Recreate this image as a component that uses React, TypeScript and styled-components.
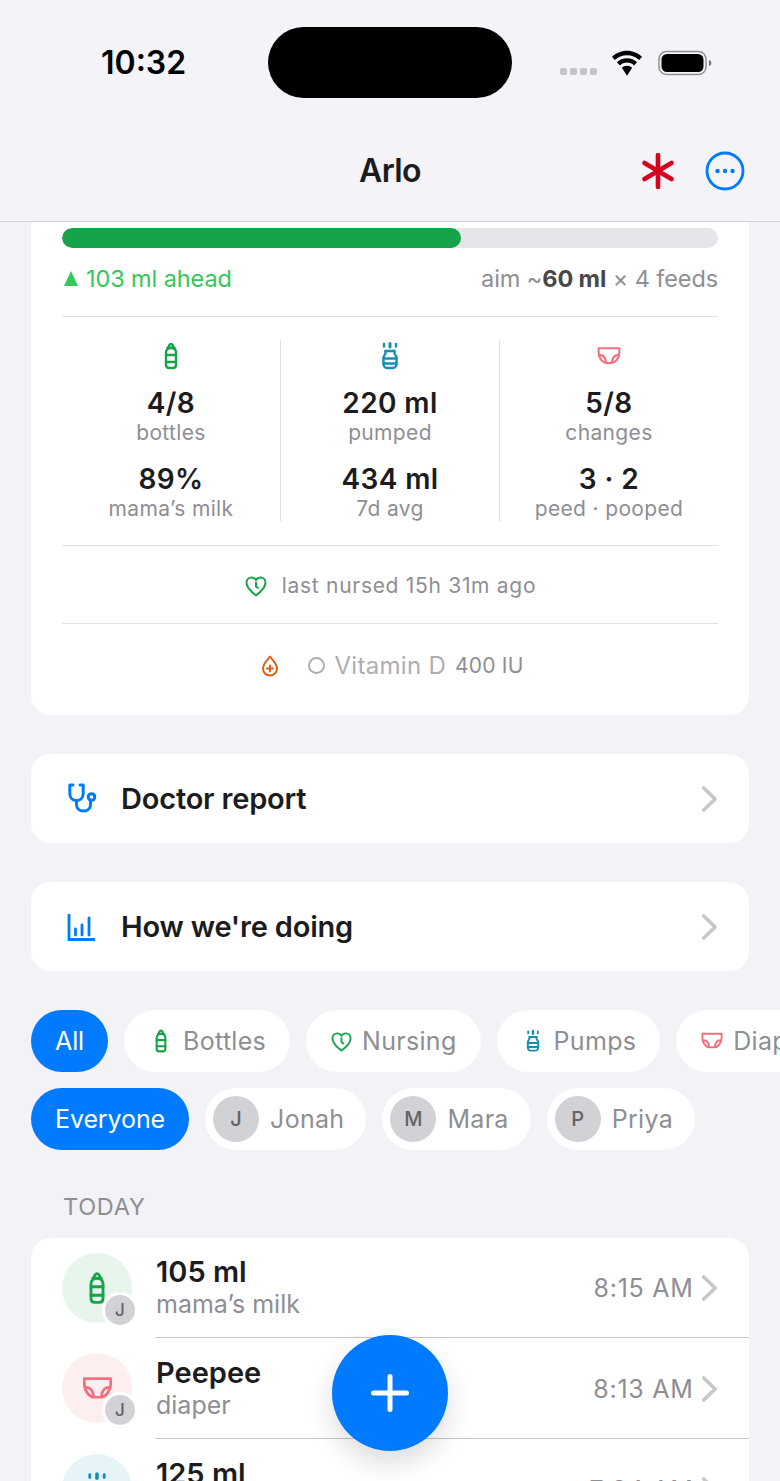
import styled, { createGlobalStyle } from 'styled-components';

const GlobalStyle = createGlobalStyle`
    html, body {
        margin: 0;
        padding: 0;
        background: #f2f2f7;
        font-family: "Inter", "Liberation Sans", sans-serif;
        -webkit-font-smoothing: antialiased;
    }
    * { box-sizing: border-box; }
`

const Screen = styled('div')`
    position: relative;
    width: 780px;
    height: 1481px;
    overflow: hidden;
    background: #f2f2f7;
    color: #1c1c1e;
`

const Header = styled('header')`
    height: 222px;
    border-bottom: 1px solid #d2d2d6;
    background: #f3f3f8;
`

const StatusBar = styled('div')`
    height: 122px;
    display: grid;
    grid-template-columns: 268px 244px 1fr;
    padding-top: 27px;
`

const Clock = styled('div')`
    font-size: 32px;
    font-weight: 600;
    line-height: 72px;
    height: 72px;
    color: #000;
    padding-left: 101px;
`

const Island = styled('div')`
    height: 71px;
    background: #000;
    border-radius: 36px;
`

const StatusIcons = styled('div')`
    display: flex;
    align-items: center;
    height: 72px;
    padding-left: 48px;
    gap: 12px;
`

const SignalDots = styled('div')`
    display: flex;
    gap: 3px;
    margin-top: 16px;
`

const SignalDot = styled('span')`
    width: 7px;
    height: 7px;
    border-radius: 2px;
    background: #c4c4c8;
`

const NavBar = styled('div')`
    height: 99px;
    display: grid;
    grid-template-columns: 1fr auto 1fr;
    align-items: center;
    padding: 0 35px;
`

const NavTitle = styled('div')`
    font-size: 32px;
    font-weight: 600;
    letter-spacing: -0.6px;
    margin-top: -2px;
`

const NavActions = styled('div')`
    display: flex;
    justify-content: flex-end;
    align-items: center;
    gap: 29px;
    margin-top: -2px;
`

const Content = styled('main')`
    padding: 0 31px;
`

const SummaryCard = styled('section')`
    background: #fff;
    border-radius: 0 0 20px 20px;
    padding: 6px 31px 0;
    height: 493px;
`

const ProgressTrack = styled('div')`
    height: 20px;
    border-radius: 10px;
    background: #e5e5ea;
    overflow: hidden;
`

const ProgressFill = styled('div')`
    height: 100%;
    border-radius: 10px;
    background: #16a34a;
`

const GoalRow = styled('div')`
    display: flex;
    justify-content: space-between;
    align-items: center;
    height: 69px;
    padding-bottom: 7px;
    border-bottom: 1px solid #e1e1e5;
    font-size: 23.5px;
`

const Ahead = styled('div')`
    display: flex;
    align-items: center;
    gap: 7px;
    margin-left: 2px;
    color: #34c759;
    letter-spacing: -0.1px;
`

const AheadArrow = styled('span')`
    width: 0;
    height: 0;
    margin-right: 1px;
    border-left: 7.5px solid transparent;
    border-right: 7.5px solid transparent;
    border-bottom: 15px solid #34c759;
`

const Aim = styled('div')`
    color: #8e8e93;
    letter-spacing: -0.1px;

    b {
        color: #48484a;
        font-weight: 700;
    }
`

const StatsGrid = styled('div')`
    display: grid;
    grid-template-columns: 218px 219px 219px;
    padding: 23px 0;
    border-bottom: 1px solid #e1e1e5;
`

const StatColumn = styled('div')<{ $divided?: boolean }>`
    height: 182px;
    display: flex;
    flex-direction: column;
    align-items: center;
    border-left: ${props => props.$divided ? '1px solid #e1e1e5' : 'none'};
`

const StatIcon = styled('div')`
    height: 32px;
    margin-bottom: 15px;
    display: flex;
    align-items: center;
    justify-content: center;
`

const StatValue = styled('div')`
    font-size: 28px;
    font-weight: 600;
    letter-spacing: 0.4px;
    line-height: 34px;
    color: #1c1c1e;
`

const StatLabel = styled('div')`
    font-size: 21px;
    letter-spacing: 0.35px;
    line-height: 26px;
    color: #8e8e93;
    margin-bottom: 16px;

    &:last-child {
        margin-bottom: 0;
    }
`

const NursedRow = styled('div')`
    height: 78px;
    padding-top: 2px;
    display: flex;
    align-items: center;
    justify-content: center;
    gap: 14px;
    font-size: 21px;
    letter-spacing: 0.7px;
    color: #8e8e93;
    border-bottom: 1px solid #e1e1e5;
`

const VitaminRow = styled('div')`
    height: 83px;
    padding-left: 4px;
    display: flex;
    align-items: center;
    justify-content: center;
    font-size: 21px;
    letter-spacing: 0.2px;
    color: #8e8e93;
`

const VitaminRing = styled('span')`
    width: 17px;
    height: 17px;
    margin: 0 9px 0 28px;
    border: 2px solid #aeaeb2;
    border-radius: 50%;
`

const VitaminName = styled('span')`
    font-size: 24px;
    letter-spacing: 0.3px;
    color: #aeaeb2;
    margin-right: 9px;
`

const LinkCard = styled('div')`
    height: 89px;
    margin-top: 39px;
    padding: 0 31px 0 36px;
    display: flex;
    align-items: center;
    background: #fff;
    border-radius: 20px;
`

const LinkIcon = styled('div')`
    width: 54px;
    display: flex;
`

const LinkLabel = styled('div')`
    flex: 1;
    font-size: 29px;
    font-weight: 600;
    letter-spacing: -0.2px;
    color: #1c1c1e;
`

const ChipRow = styled('div')`
    display: flex;
    gap: 16px;
    margin-top: 16px;
    width: 780px;
    overflow: hidden;
`

const ChipRowFirst = styled(ChipRow)`
    margin-top: 39px;
`

const Chip = styled('div')<{ $active?: boolean; $compact?: boolean }>`
    flex: none;
    height: 62px;
    padding: ${props => props.$compact ? '0 22px 0 8px' : '0 24px'};
    display: flex;
    align-items: center;
    gap: ${props => props.$compact ? '11px' : '9px'};
    border-radius: 31px;
    font-size: 25px;
    letter-spacing: ${props => props.$active ? '-0.1px' : '0.3px'};
    color: ${props => props.$active ? '#fff' : '#8e8e93'};
    background: ${props => props.$active ? '#007aff' : '#fff'};
`

const ChipAvatar = styled('span')`
    width: 46px;
    height: 46px;
    border-radius: 50%;
    background: #d1d1d6;
    color: #636366;
    font-size: 20px;
    font-weight: 500;
    display: flex;
    align-items: center;
    justify-content: center;
`

const SectionTitle = styled('div')`
    margin: 42px 0 0 32px;
    height: 30px;
    line-height: 30px;
    font-size: 23.5px;
    letter-spacing: 0.7px;
    color: #8e8e93;
`

const ListCard = styled('section')`
    margin-top: 16px;
    background: #fff;
    border-radius: 20px 20px 0 0;
`

const Row = styled('div')<{ $first?: boolean }>`
    display: flex;
    padding-left: 31px;
    height: ${props => props.$first ? '100px' : '101px'};
`

const RowAvatar = styled('div')<{ $tint: string }>`
    position: relative;
    flex: none;
    width: 70px;
    height: 70px;
    margin-top: 15px;
    border-radius: 50%;
    background: ${props => props.$tint};
    display: flex;
    align-items: center;
    justify-content: center;
`

const RowBadge = styled('span')`
    position: absolute;
    right: -6px;
    bottom: -5px;
    width: 36px;
    height: 36px;
    border: 3px solid #fff;
    border-radius: 50%;
    background: #d1d1d6;
    color: #636366;
    font-size: 17px;
    font-weight: 500;
    display: flex;
    align-items: center;
    justify-content: center;
`

const RowBody = styled('div')<{ $first?: boolean }>`
    flex: 1;
    margin-left: 24px;
    padding: ${props => props.$first ? '17px' : '18px'} 31px 0 0;
    height: 100%;
    display: flex;
    align-items: flex-start;
    justify-content: space-between;
    border-bottom: 1px solid #c6c6c8;
`

const RowText = styled('div')`
    display: flex;
    flex-direction: column;
`

const RowTitle = styled('div')`
    font-size: 29px;
    font-weight: 600;
    line-height: 34px;
    color: #1c1c1e;
`

const RowSubtitle = styled('div')`
    font-size: 25px;
    line-height: 30px;
    color: #8e8e93;
`

const RowTime = styled('div')`
    display: flex;
    align-items: center;
    gap: 7px;
    height: 66px;
    font-size: 25px;
    letter-spacing: 0.75px;
    color: #8e8e93;
`

const Fab = styled('button')`
    position: absolute;
    left: 332px;
    top: 1335px;
    width: 116px;
    height: 116px;
    padding: 0;
    border: none;
    border-radius: 50%;
    background: #007aff;
    box-shadow: 0 12px 28px rgba(0, 0, 0, 0.14);
    display: flex;
    align-items: center;
    justify-content: center;
`

interface IconProps {
    size?: number;
    color?: string;
}

const BottleIcon = ({ size = 30, color = '#16a34a' }: IconProps) => (
    <svg width={size} height={size} viewBox="0 0 30 30" fill="none" stroke={color} strokeWidth="2.4" strokeLinecap="round" strokeLinejoin="round">
        <path d="M12.6 6.5c0-1.600 1-3.500 2.400-3.500s2.400 1.900 2.400 3.500" />
        <path d="M11.500 6.800h7" />
        <path d="M10 11.500c0-2.600 1.800-4.500 5-4.500s5 1.900 5 4.500v12.300c0 2-1.300 3.200-3 3.200h-4c-1.700 0-3-1.200-3-3.200z" />
        <path d="M10 14h10M10 21h10" />
    </svg>
)

const PumpIcon = ({ size = 30, color = '#1391b4' }: IconProps) => (
    <svg width={size} height={size} viewBox="0 0 30 30" fill="none" stroke={color} strokeWidth="2.4" strokeLinecap="round" strokeLinejoin="round">
        <path d="M9 3v2.500M21 3v2.500" />
        <path d="M15 2.500v3.500" strokeWidth="3" />
        <path d="M10.500 10v2.500L8.500 16v7c0 2.200 1.600 4 3.500 4h6c1.900 0 3.500-1.800 3.500-4v-7l-2-3.500V10" />
        <path d="M10.500 10h9M8.500 17.500h13M8.500 22.500h13" />
    </svg>
)

const DiaperIcon = ({ size = 26, color = '#f0707f' }: IconProps) => (
    <svg width={size} height={size} viewBox="0 0 30 30" fill="none" stroke={color} strokeWidth="2.4" strokeLinecap="round" strokeLinejoin="round">
        <path d="M3 6h24v5c0 6.500-5 12-9 12h-6C8 23 3 17.500 3 11z" />
        <path d="M5 14c3.500.2 5.800 2.800 6.500 8M25 14c-3.500.2-5.800 2.800-6.500 8" />
    </svg>
)

const HeartClockIcon = ({ size = 24, color = '#16a34a' }: IconProps) => (
    <svg width={size} height={size} viewBox="0 0 24 24" fill="none" stroke={color} strokeWidth="2" strokeLinecap="round" strokeLinejoin="round">
        <path d="M12 21.500C6.500 17.300 2.500 13.400 2.500 8.800c0-3.100 2.300-5.300 5-5.300 1.900 0 3.500.9 4.500 2.600 1-1.700 2.600-2.600 4.500-2.600 2.700 0 5 2.200 5 5.300 0 4.600-4 8.500-9.500 12.700z" />
        <path d="M12 8.500V12.500l2 1.500" />
    </svg>
)

const DropPlusIcon = () => (
    <svg width="20" height="24" viewBox="0 0 20 24" fill="none" stroke="#dd5f13" strokeWidth="2" strokeLinecap="round" strokeLinejoin="round">
        <path d="M10 2.500c2.500 3.700 7 6.900 7 12 0 3.900-3.100 7-7 7s-7-3.100-7-7c0-5.100 4.500-8.300 7-12z" />
        <path d="M10 11.500v6M7 14.500h6" />
    </svg>
)

const StethoscopeIcon = () => (
    <svg width="32" height="32" viewBox="0 0 32 32" fill="none" stroke="#007aff" strokeWidth="3" strokeLinecap="round" strokeLinejoin="round">
        <path d="M6 2H2.800v8.500c0 4.200 3 7 6.700 7s6.700-2.800 6.700-7V2H13" />
        <path d="M9.500 17.500v4c0 4.500 3.200 6.500 7 6.500s7-2 7-6.500v-4" />
        <circle cx="24.500" cy="14" r="3.300" />
    </svg>
)

const BarsIcon = () => (
    <svg width="30" height="30" viewBox="0 0 30 30" fill="none" stroke="#007aff" strokeWidth="2.800" strokeLinecap="round">
        <path d="M2 2v25.500h26" strokeLinejoin="miter" strokeLinecap="butt" />
        <path d="M8.500 17v6M15 13v10M22 6v17" />
    </svg>
)

const Chevron = ({ size = 28 }: { size?: number }) => (
    <svg width={size * 0.62} height={size} viewBox="0 0 17 28" fill="none" stroke="#c7c7cc" strokeWidth="3.600" strokeLinecap="round" strokeLinejoin="round">
        <path d="M2.500 3l11.500 11L2.500 25" />
    </svg>
)

const WifiIcon = () => (
    <svg width="36" height="29" viewBox="0 0 32 26" fill="#000">
        <path d="M16 5.500c4.200 0 8 1.600 10.900 4.300l2.600-2.800C25.900 3.600 21.200 1.500 16 1.500S6.100 3.600 2.500 7l2.600 2.800C8 7.100 11.800 5.500 16 5.500z" />
        <path d="M16 12.200c2.400 0 4.600.9 6.300 2.500l2.700-2.900C22.600 9.500 19.500 8.200 16 8.200s-6.600 1.300-9 3.600l2.700 2.900c1.700-1.600 3.900-2.500 6.300-2.500z" />
        <path d="M16 15c-1.800 0-3.400.7-4.600 1.800L16 24l4.600-7.200C19.400 15.700 17.800 15 16 15z" />
    </svg>
)

const BatteryIcon = () => (
    <svg width="55" height="26" viewBox="0 0 55 26" fill="none">
        <rect x="2" y="1.500" width="47" height="23" rx="7.500" stroke="#8e8e93" strokeWidth="1.500" />
        <rect x="4.500" y="4" width="42" height="18" rx="5.500" fill="#000" />
        <path d="M52 10c1.500.5 2.300 1.500 2.300 3s-.8 2.500-2.300 3z" fill="#6e6e73" />
    </svg>
)

const AsteriskIcon = () => (
    <svg width="36" height="38" viewBox="0 0 36 38" fill="none" stroke="#d7001e" strokeWidth="4.600" strokeLinecap="round">
        <path d="M18 3v32M4.500 11l27 16M31.500 11l-27 16" />
    </svg>
)

const MoreIcon = () => (
    <svg width="40" height="40" viewBox="0 0 40 40" fill="none">
        <circle cx="20" cy="20" r="18" stroke="#007aff" strokeWidth="2.800" />
        <circle cx="12.500" cy="20" r="2.200" fill="#007aff" />
        <circle cx="20" cy="20" r="2.200" fill="#007aff" />
        <circle cx="27.500" cy="20" r="2.200" fill="#007aff" />
    </svg>
)

const PlusIcon = () => (
    <svg width="38" height="38" viewBox="0 0 38 38" fill="none" stroke="#fff" strokeWidth="5" strokeLinecap="round">
        <path d="M19 2.500v33M2.500 19h33" />
    </svg>
)

const App = () => {
    return (
        <Screen>
            <GlobalStyle />
            <Header>
                <StatusBar>
                    <Clock>10:32</Clock>
                    <Island />
                    <StatusIcons>
                        <SignalDots>
                            <SignalDot />
                            <SignalDot />
                            <SignalDot />
                            <SignalDot />
                        </SignalDots>
                        <WifiIcon />
                        <BatteryIcon />
                    </StatusIcons>
                </StatusBar>
                <NavBar>
                    <div />
                    <NavTitle>Arlo</NavTitle>
                    <NavActions>
                        <AsteriskIcon />
                        <MoreIcon />
                    </NavActions>
                </NavBar>
            </Header>

            <Content>
                <SummaryCard>
                    <ProgressTrack>
                        <ProgressFill style={{ width: `${(399 / 656) * 100}%` }} />
                    </ProgressTrack>
                    <GoalRow>
                        <Ahead><AheadArrow />103 ml ahead</Ahead>
                        <Aim>aim ~<b>60 ml</b> × 4 feeds</Aim>
                    </GoalRow>
                    <StatsGrid>
                        <StatColumn>
                            <StatIcon><BottleIcon /></StatIcon>
                            <StatValue>4/8</StatValue>
                            <StatLabel>bottles</StatLabel>
                            <StatValue>89%</StatValue>
                            <StatLabel>mama’s milk</StatLabel>
                        </StatColumn>
                        <StatColumn $divided>
                            <StatIcon><PumpIcon /></StatIcon>
                            <StatValue>220 ml</StatValue>
                            <StatLabel>pumped</StatLabel>
                            <StatValue>434 ml</StatValue>
                            <StatLabel>7d avg</StatLabel>
                        </StatColumn>
                        <StatColumn $divided>
                            <StatIcon><DiaperIcon /></StatIcon>
                            <StatValue>5/8</StatValue>
                            <StatLabel>changes</StatLabel>
                            <StatValue>3 · 2</StatValue>
                            <StatLabel>peed · pooped</StatLabel>
                        </StatColumn>
                    </StatsGrid>
                    <NursedRow>
                        <HeartClockIcon />
                        last nursed 15h 31m ago
                    </NursedRow>
                    <VitaminRow>
                        <DropPlusIcon />
                        <VitaminRing />
                        <VitaminName>Vitamin D</VitaminName>
                        400 IU
                    </VitaminRow>
                </SummaryCard>

                <LinkCard>
                    <LinkIcon><StethoscopeIcon /></LinkIcon>
                    <LinkLabel>Doctor report</LinkLabel>
                    <Chevron />
                </LinkCard>
                <LinkCard>
                    <LinkIcon><BarsIcon /></LinkIcon>
                    <LinkLabel>How we're doing</LinkLabel>
                    <Chevron />
                </LinkCard>

                <ChipRowFirst>
                    <Chip $active>All</Chip>
                    <Chip><BottleIcon size={26} />Bottles</Chip>
                    <Chip><HeartClockIcon size={23} />Nursing</Chip>
                    <Chip><PumpIcon size={24} />Pumps</Chip>
                    <Chip><DiaperIcon size={24} />Diapers</Chip>
                </ChipRowFirst>
                <ChipRow>
                    <Chip $active>Everyone</Chip>
                    <Chip $compact><ChipAvatar>J</ChipAvatar>Jonah</Chip>
                    <Chip $compact><ChipAvatar>M</ChipAvatar>Mara</Chip>
                    <Chip $compact><ChipAvatar>P</ChipAvatar>Priya</Chip>
                </ChipRow>

                <SectionTitle>TODAY</SectionTitle>
                <ListCard>
                    <Row $first>
                        <RowAvatar $tint="#e7f5ec">
                            <BottleIcon size={36} />
                            <RowBadge>J</RowBadge>
                        </RowAvatar>
                        <RowBody $first>
                            <RowText>
                                <RowTitle>105 ml</RowTitle>
                                <RowSubtitle>mama’s milk</RowSubtitle>
                            </RowText>
                            <RowTime>8:15 AM<Chevron /></RowTime>
                        </RowBody>
                    </Row>
                    <Row>
                        <RowAvatar $tint="#fdeef0">
                            <DiaperIcon size={33} />
                            <RowBadge>J</RowBadge>
                        </RowAvatar>
                        <RowBody>
                            <RowText>
                                <RowTitle>Peepee</RowTitle>
                                <RowSubtitle>diaper</RowSubtitle>
                            </RowText>
                            <RowTime>8:13 AM<Chevron /></RowTime>
                        </RowBody>
                    </Row>
                    <Row>
                        <RowAvatar $tint="#e6f4f8">
                            <PumpIcon size={36} />
                        </RowAvatar>
                        <RowBody>
                            <RowText>
                                <RowTitle>125 ml</RowTitle>
                                <RowSubtitle>pumped</RowSubtitle>
                            </RowText>
                            <RowTime>7:34 AM<Chevron /></RowTime>
                        </RowBody>
                    </Row>
                </ListCard>
            </Content>

            <Fab aria-label="Add"><PlusIcon /></Fab>
        </Screen>
    );
};

export default App;
